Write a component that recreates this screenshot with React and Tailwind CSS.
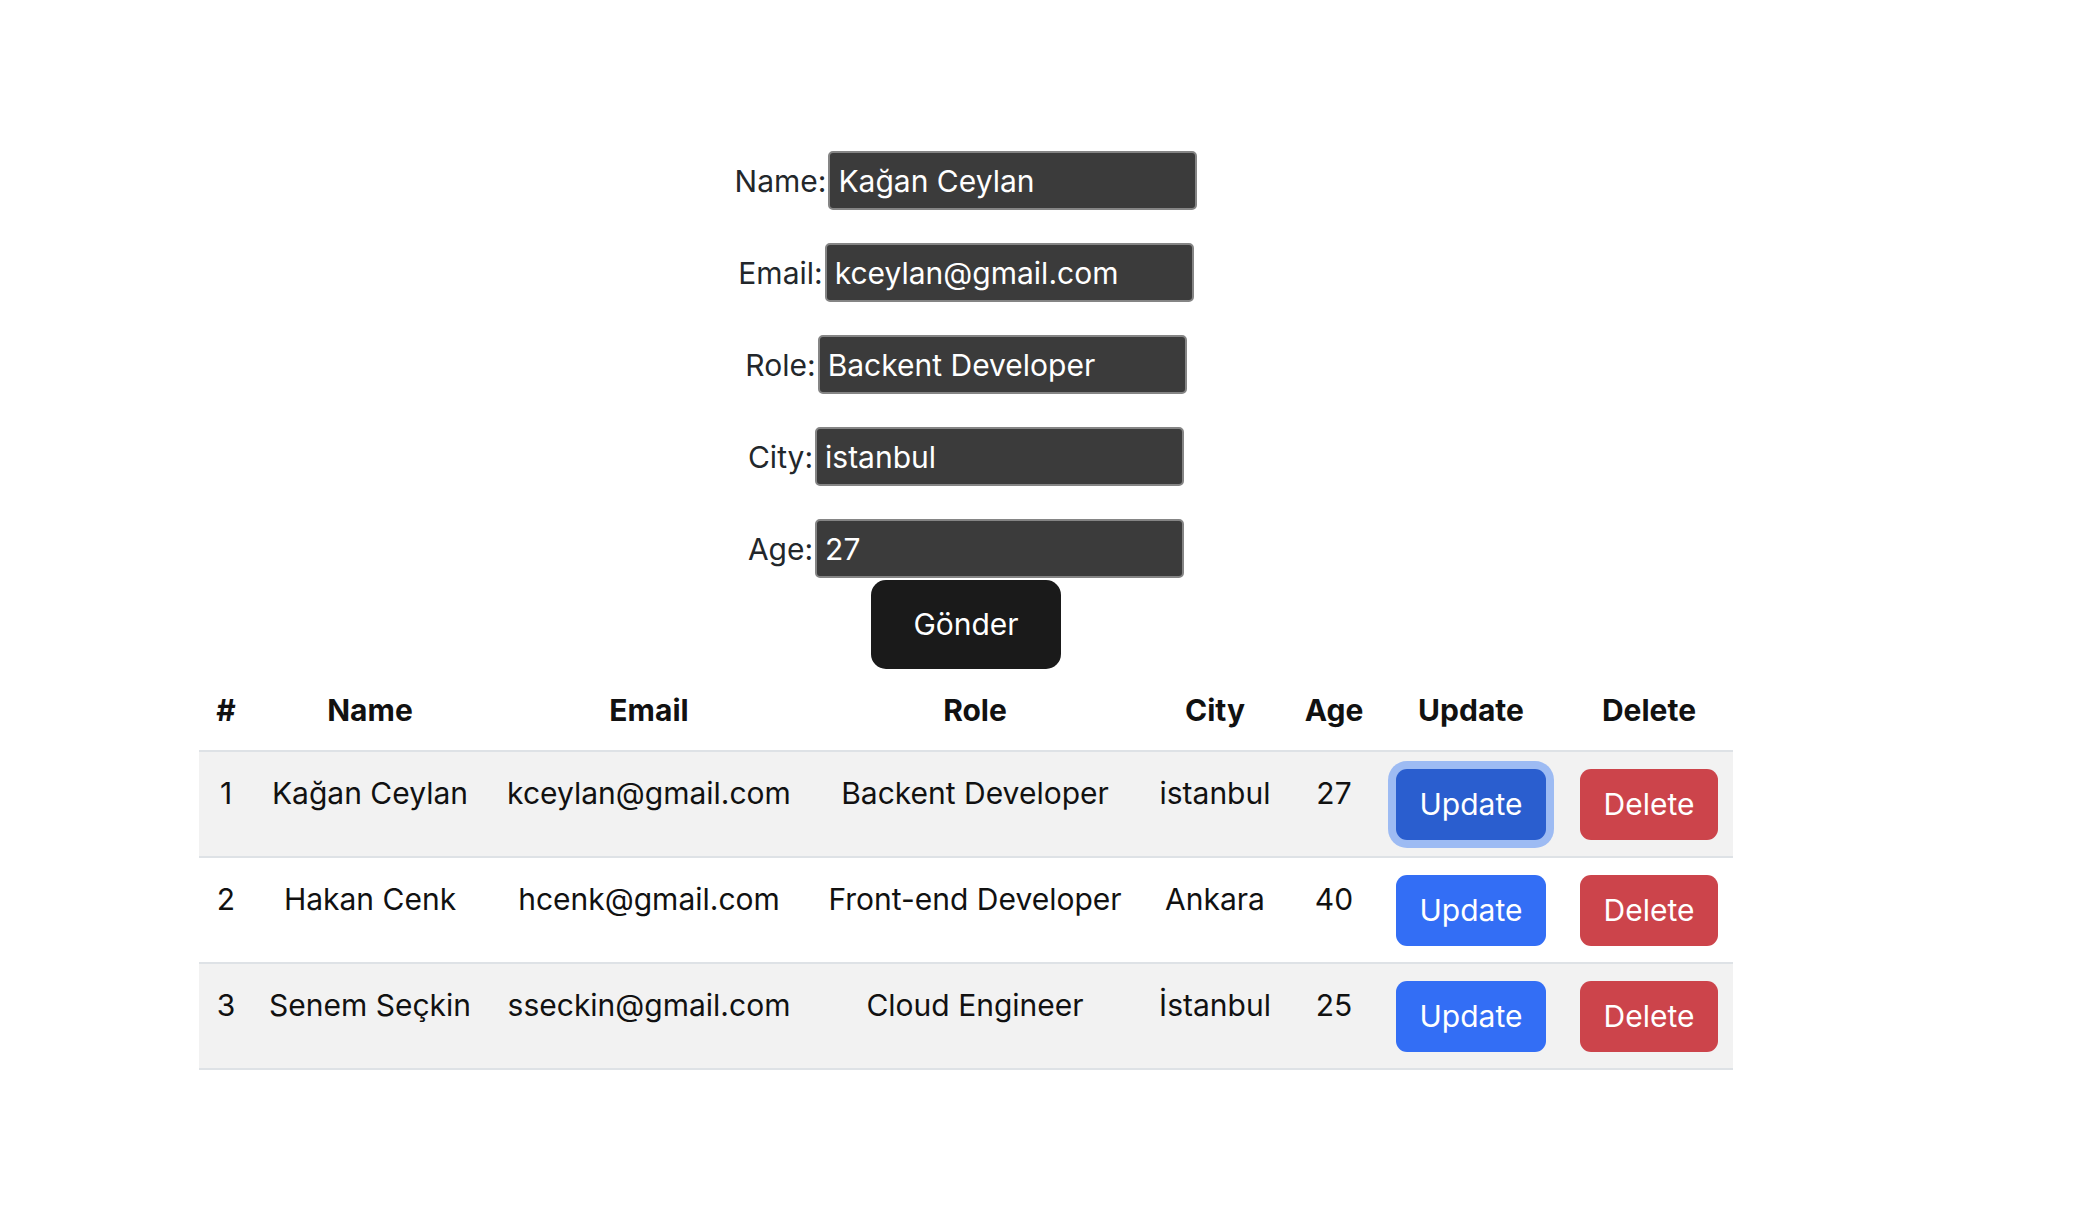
import React, { useState } from "react";

const USERS = [
  { id: 1, name: "Kağan Ceylan", email: "kceylan@gmail.com", role: "Backent Developer", city: "istanbul", age: 27 },
  { id: 2, name: "Hakan Cenk", email: "hcenk@gmail.com", role: "Front-end Developer", city: "Ankara", age: 40 },
  { id: 3, name: "Senem Seçkin", email: "sseckin@gmail.com", role: "Cloud Engineer", city: "İstanbul", age: 25 },
];

const FIELDS = [
  { key: "name", label: "Name:" },
  { key: "email", label: "Email:" },
  { key: "role", label: "Role:" },
  { key: "city", label: "City:" },
  { key: "age", label: "Age:" },
];

export default function App() {
  const [form, setForm] = useState({
    name: "Kağan Ceylan",
    email: "kceylan@gmail.com",
    role: "Backent Developer",
    city: "istanbul",
    age: "27",
  });

  return (
    <div className="min-h-screen w-[1932px] bg-white font-['Inter','Liberation_Sans',sans-serif] text-[30px] leading-[45px] flex flex-col items-center pt-[151px]">
      <form className="flex flex-col items-center" onSubmit={(e) => e.preventDefault()}>
        <div className="flex flex-col items-center gap-[33px]">
          {FIELDS.map((f) => (
            <div key={f.key} className="flex items-baseline">
              <label className="text-[#23272b] pr-[2px]">{f.label}</label>
              <input
                type="text"
                value={form[f.key]}
                onChange={(e) => setForm({ ...form, [f.key]: e.target.value })}
                className="w-[369px] h-[59px] bg-[#3b3b3b] border-2 border-[#858585] rounded-[5px] px-[8px] text-white text-[30px] outline-none"
              />
            </div>
          ))}
        </div>
        <button
          type="submit"
          className="mt-[2px] w-[190px] h-[89px] rounded-[15px] bg-[#1a1a1a] text-white font-normal text-[30px]"
        >
          Gönder
        </button>
      </form>

      <table className="w-[1534px] mt-[2px] border-collapse text-center text-[#111]">
        <colgroup>
          <col className="w-[54px]" />
          <col className="w-[234px]" />
          <col className="w-[324px]" />
          <col className="w-[328px]" />
          <col className="w-[152px]" />
          <col className="w-[86px]" />
          <col className="w-[188px]" />
          <col className="w-[168px]" />
        </colgroup>
        <thead>
          <tr className="border-b-2 border-[#dee2e6]">
            {["#", "Name", "Email", "Role", "City", "Age", "Update", "Delete"].map((h) => (
              <th key={h} className="font-bold pt-[17px] pb-[17px] align-top whitespace-nowrap">{h}</th>
            ))}
          </tr>
        </thead>
        <tbody>
          {USERS.map((u, i) => (
            <tr key={u.id} className={`border-b-2 border-[#dee2e6] ${i % 2 === 0 ? "bg-[#f2f2f2]" : "bg-white"}`}>
              <td className="align-top pt-[19px] whitespace-nowrap">{u.id}</td>
              <td className="align-top pt-[19px] whitespace-nowrap">{u.name}</td>
              <td className="align-top pt-[19px] whitespace-nowrap">{u.email}</td>
              <td className="align-top pt-[19px] whitespace-nowrap">{u.role}</td>
              <td className="align-top pt-[19px] whitespace-nowrap">{u.city}</td>
              <td className="align-top pt-[19px] whitespace-nowrap">{u.age}</td>
              <td className="align-top pt-[17px] pb-[16px]">
                <button
                  className={`w-[150px] h-[71px] rounded-[11px] text-white ${
                    i === 0 ? "bg-[#2a5ecf] ring-[8px] ring-[#9dbbf3]" : "bg-[#336ef5]"
                  }`}
                >
                  Update
                </button>
              </td>
              <td className="align-top pt-[17px] pb-[16px]">
                <button className="w-[138px] h-[71px] rounded-[11px] bg-[#cc444b] text-white">Delete</button>
              </td>
            </tr>
          ))}
        </tbody>
      </table>
    </div>
  );
}
